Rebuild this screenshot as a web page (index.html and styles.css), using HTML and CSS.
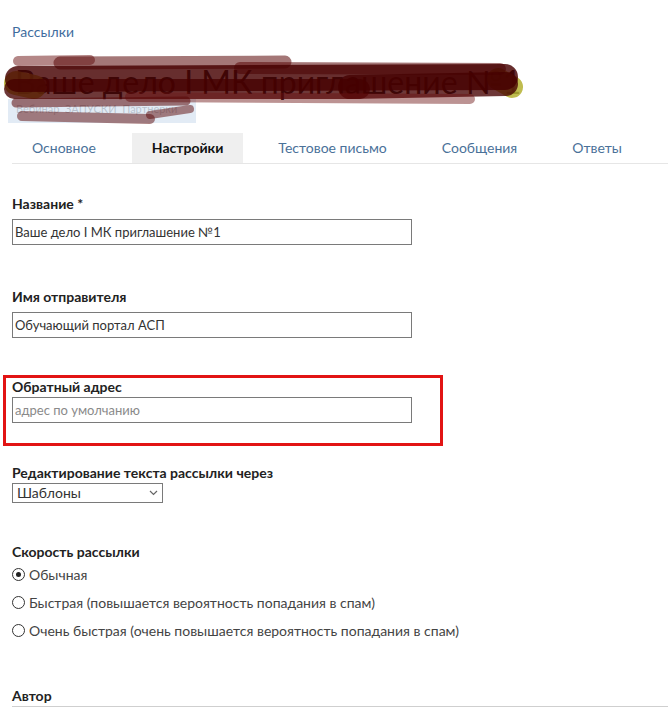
FILE: index.html
```html
<!DOCTYPE html>
<html lang="ru">
<head>
<meta charset="utf-8">
<title>Рассылки — Настройки</title>
<link rel="stylesheet" href="styles.css">
</head>
<body>
<div class="page">
  <a class="crumb" href="#">Рассылки</a>

  <div class="title-wrap">
    <h1 class="title">Ваше дело I МК приглашение №1</h1>
    <div class="path">Вебинар&nbsp;&nbsp;ЗАПУСКИ&nbsp;&nbsp;Партнерки</div>
    <svg class="scribble" width="530" height="72" viewBox="0 0 530 72" aria-hidden="true">
      <rect x="8" y="46" width="188" height="24" fill="#dbe6f3" opacity="0.8"/>
      <g stroke-linecap="round" fill="none">
        <path d="M16 30 L34 34" stroke="#b4ae2a" stroke-width="24" opacity="0.85"/>
        <path d="M498 26 L512 34" stroke="#b4b030" stroke-width="22" opacity="0.85"/>
        <path d="M18 8 L90 7" stroke="#6a1010" stroke-width="10" opacity="0.5"/>
        <path d="M60 10 L285 9" stroke="#5a0808" stroke-width="13" opacity="0.55"/>
        <path d="M240 15 L500 16" stroke="#5a0808" stroke-width="12" opacity="0.55"/>
        <path d="M18 26 L505 24" stroke="#450000" stroke-width="26" opacity="0.82"/>
        <path d="M14 36 L360 36" stroke="#450000" stroke-width="20" opacity="0.78"/>
        <path d="M350 34 L506 31" stroke="#450000" stroke-width="24" opacity="0.78"/>
        <path d="M130 44 L470 46" stroke="#6a1010" stroke-width="10" opacity="0.45"/>
        <path d="M16 50 L186 48" stroke="#5a0808" stroke-width="9" opacity="0.55"/>
        <path d="M22 63 L150 66" stroke="#5a0808" stroke-width="10" opacity="0.5"/>
        <path d="M150 62 L190 56" stroke="#5a0808" stroke-width="8" opacity="0.5"/>
      </g>
    </svg>
  </div>

  <nav class="tabs">
    <a class="tab" href="#">Основное</a>
    <a class="tab active" href="#">Настройки</a>
    <a class="tab" href="#">Тестовое письмо</a>
    <a class="tab" href="#">Сообщения</a>
    <a class="tab" href="#">Ответы</a>
  </nav>

  <form class="form">
    <div class="field">
      <label class="label">Название *</label>
      <input class="input" type="text" value="Ваше дело I МК приглашение №1">
    </div>

    <div class="field">
      <label class="label">Имя отправителя</label>
      <input class="input" type="text" value="Обучающий портал АСП">
    </div>

    <div class="field field-reply">
      <label class="label label-tight">Обратный адрес</label>
      <input class="input" type="text" placeholder="адрес по умолчанию">
      <div class="highlight"></div>
    </div>

    <div class="field field-edit">
      <label class="label label-close">Редактирование текста рассылки через</label>
      <div class="select-wrap">
        <select class="select">
          <option>Шаблоны</option>
        </select>
        <svg class="chevron" width="9" height="6" viewBox="0 0 9 6" aria-hidden="true">
          <path d="M1 1 L4.5 4.5 L8 1" fill="none" stroke="#666" stroke-width="1.2"/>
        </svg>
      </div>
    </div>

    <div class="field field-speed">
      <label class="label label-radio">Скорость рассылки</label>
      <label class="radio-row"><input class="radio" type="radio" name="speed" checked> Обычная</label>
      <label class="radio-row"><input class="radio" type="radio" name="speed"> Быстрая (повышается вероятность попадания в спам)</label>
      <label class="radio-row"><input class="radio" type="radio" name="speed"> Очень быстрая (очень повышается вероятность попадания в спам)</label>
    </div>

    <div class="field">
      <label class="label label-close">Автор</label>
      <div class="author-box"></div>
    </div>
  </form>
</div>
</body>
</html>
```

FILE: styles.css
```css
html, body {
  margin: 0;
  padding: 0;
  background: #ffffff;
}

body {
  font-family: Lato, "Open Sans", "Liberation Sans", sans-serif;
  font-size: 14px;
  color: #222;
  overflow: hidden;
}

.page {
  padding: 24px 0 0 12px;
}

.crumb {
  display: block;
  font-size: 14px;
  line-height: 16px;
  color: #3f6d9e;
  text-decoration: none;
}

.title-wrap {
  position: relative;
  height: 70px;
  margin-top: 13px;
}

.title {
  margin: 0;
  padding: 12px 0 0 3px;
  font-size: 32px;
  line-height: 34px;
  font-weight: 400;
  color: #222;
  white-space: nowrap;
}

.path {
  padding: 3px 0 0 4px;
  font-size: 11px;
  line-height: 14px;
  color: #333;
}

.scribble {
  position: absolute;
  left: -12px;
  top: 0;
}

.tabs {
  display: flex;
  gap: 15px;
  margin-top: 10px;
  border-bottom: 1px solid #e6e6e6;
}

.tab {
  display: block;
  padding: 0 20px;
  height: 30px;
  line-height: 30px;
  font-size: 14px;
  color: #4a7199;
  text-decoration: none;
}

.tab:first-child {
  margin-right: 1px;
}

.tab.active {
  background: #efefef;
  color: #111;
  font-weight: 700;
}

.form {
  padding-top: 32px;
}

.field {
  margin-bottom: 44px;
}

.label {
  display: block;
  font-size: 14px;
  line-height: 16px;
  font-weight: 700;
  color: #222;
  margin-bottom: 7px;
}

.label-tight {
  margin-bottom: 2px;
}

.label-close {
  margin-bottom: 2px;
}

.label-radio {
  margin-bottom: 0;
}

.input {
  display: block;
  box-sizing: border-box;
  width: 400px;
  height: 26px;
  margin: 0;
  padding: 0 2px;
  border: 1px solid #7a7a7a;
  border-radius: 0;
  font-family: inherit;
  font-size: 13px;
  color: #333;
  background: #fff;
}

.input::placeholder {
  color: #8a8a8a;
}

.field-reply {
  position: relative;
  margin-top: -3px;
  margin-bottom: 42px;
}

.highlight {
  position: absolute;
  left: -9px;
  top: -4px;
  width: 440px;
  height: 71px;
  box-sizing: border-box;
  border: 3px solid #e21414;
  pointer-events: none;
}

.field-edit {
  margin-bottom: 41px;
}

.select-wrap {
  position: relative;
  width: 151px;
  height: 20px;
}

.select {
  -webkit-appearance: none;
  appearance: none;
  box-sizing: border-box;
  width: 151px;
  height: 20px;
  margin: 0;
  padding: 0 0 0 4px;
  border: 1px solid #7a7a7a;
  border-radius: 0;
  background: #fff;
  font-family: inherit;
  font-size: 14px;
  line-height: 18px;
  color: #333;
}

.chevron {
  position: absolute;
  right: 5px;
  top: 7px;
  pointer-events: none;
}

.field-speed {
  margin-bottom: 44px;
}

.radio-row {
  display: flex;
  align-items: center;
  gap: 4px;
  height: 28px;
  font-size: 14px;
  color: #444;
}

.radio {
  -webkit-appearance: none;
  appearance: none;
  box-sizing: border-box;
  width: 13px;
  height: 13px;
  margin: 0;
  border: 1px solid #333;
  border-radius: 50%;
  background: #fff;
  display: grid;
  place-items: center;
}

.radio:checked::after {
  content: "";
  width: 5px;
  height: 5px;
  border-radius: 50%;
  background: #222;
}

.author-box {
  height: 40px;
  border-top: 1px solid #cfcfcf;
}
```
